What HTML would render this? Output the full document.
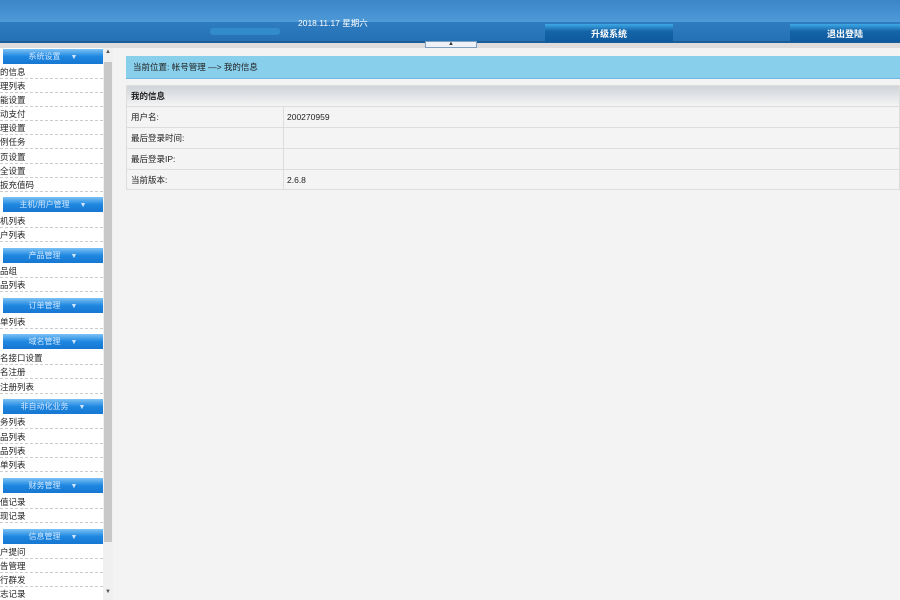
<!DOCTYPE html>
<html><head><meta charset="utf-8"><style>
*{margin:0;padding:0;box-sizing:border-box}
body{width:900px;height:600px;overflow:hidden;background:#f4f3f3;font-family:"Liberation Sans","Noto Sans CJK SC",sans-serif;font-size:9px;color:#222;position:relative}
.a{position:absolute}
.top{left:0;top:0;width:900px;height:23px;background:linear-gradient(#3c86c8,#4f9ad8)}
.band{left:0;top:22px;width:900px;height:21px;background:linear-gradient(#2f7cc0,#2671b6);border-bottom:2px solid #1d5d95}
.btn{top:24px;height:18px;background:linear-gradient(#3fa9e6,#1565a8 40%,#0e5a9e);color:#fff;font-weight:bold;text-align:center;line-height:20px;font-size:9px}
.grey{left:0;top:43px;width:900px;height:5px;background:#dedcdc}
.sb{left:0;top:48px;width:103px;height:552px;background:#fff;overflow:hidden}
.h{position:absolute;left:0;width:103px;height:15px;background:linear-gradient(#7cc2f4,#1f87e0 50%,#1577d2);color:#cfe6ff;text-align:center;line-height:15px;font-size:8px;border-left:3px solid #fff}
.h span{margin-left:10px;font-size:7px}
.i{position:absolute;left:0;width:103px;height:14px;line-height:14px;border-bottom:1px dashed #ccc;font-size:8.5px;white-space:nowrap}
.scroll{left:103px;top:48px;width:10px;height:552px;background:#f0f0f0}
.thumb{left:104px;top:62px;width:8px;height:480px;background:#c8c8c8}
</style></head><body>
<div class="a top"></div>
<div class="a band"></div>
<div class="a" style="left:210px;top:28px;width:70px;height:7px;background:#3aa0dc;opacity:.5;border-radius:3px"></div>
<div class="a" style="left:298px;top:17px;color:#fff;font-size:8.5px">2018.11.17 星期六</div>
<div class="a btn" style="left:545px;width:128px">升级系统</div>
<div class="a btn" style="left:790px;width:110px">退出登陆</div>
<div class="a grey"></div>
<div class="a" style="left:425px;top:41px;width:52px;height:7px;background:#eef2f7;border:1px solid #7f9fc0;font-size:6px;text-align:center;line-height:4px;color:#333">▲</div>

<div class="a sb">
<div class="h" style="top:1px">系统设置<span>▼</span></div>
<div class="i" style="top:17px">的信息</div>
<div class="i" style="top:31px">理列表</div>
<div class="i" style="top:45px">能设置</div>
<div class="i" style="top:59px">动支付</div>
<div class="i" style="top:73px">理设置</div>
<div class="i" style="top:87px">例任务</div>
<div class="i" style="top:102px">页设置</div>
<div class="i" style="top:116px">全设置</div>
<div class="i" style="top:130px">扳充值码</div>
<div class="h" style="top:149px">主机/用户管理<span>▼</span></div>
<div class="i" style="top:166px">机列表</div>
<div class="i" style="top:180px">户列表</div>
<div class="h" style="top:200px">产品管理<span>▼</span></div>
<div class="i" style="top:216px">品组</div>
<div class="i" style="top:230px">品列表</div>
<div class="h" style="top:250px">订单管理<span>▼</span></div>
<div class="i" style="top:267px">单列表</div>
<div class="h" style="top:286px">域名管理<span>▼</span></div>
<div class="i" style="top:303px">名接口设置</div>
<div class="i" style="top:317px">名注册</div>
<div class="i" style="top:332px">注册列表</div>
<div class="h" style="top:351px">非自动化业务<span>▼</span></div>
<div class="i" style="top:367px">务列表</div>
<div class="i" style="top:382px">品列表</div>
<div class="i" style="top:396px">品列表</div>
<div class="i" style="top:410px">单列表</div>
<div class="h" style="top:430px">财务管理<span>▼</span></div>
<div class="i" style="top:447px">值记录</div>
<div class="i" style="top:461px">现记录</div>
<div class="h" style="top:481px">信息管理<span>▼</span></div>
<div class="i" style="top:497px">户提问</div>
<div class="i" style="top:511px">告管理</div>
<div class="i" style="top:525px">行群发</div>
<div class="i" style="top:539px">志记录</div>
</div>
<div class="a scroll"></div>
<div class="a thumb"></div>
<div class="a" style="left:105px;top:49px;font-size:6px;color:#555">▲</div>
<div class="a" style="left:105px;top:589px;font-size:6px;color:#555">▼</div>

<div class="a" style="left:126px;top:56px;width:774px;height:23px;background:#88cfec;border-bottom:1px solid #6cb8de;line-height:22px;padding-left:7px;font-size:8.5px">当前位置: 帐号管理 —&gt; 我的信息</div>
<div class="a" style="left:126px;top:85px;width:774px;height:105px;border:1px solid #ddd;background:#f4f4f4">
<div style="height:21px;background:linear-gradient(#d0d4d9,#f4f4f4);font-weight:bold;line-height:21px;padding-left:4px;font-size:8.5px;border-bottom:1px solid #ddd">我的信息</div>
<div style="height:21px;border-bottom:1px solid #ddd;line-height:20px;font-size:8.5px;position:relative"><span style="padding-left:4px">用户名:</span><span class="a" style="left:156px;top:0;height:20px;border-left:1px solid #ddd;padding-left:3px">200270959</span></div>
<div style="height:21px;border-bottom:1px solid #ddd;line-height:20px;font-size:8.5px;position:relative"><span style="padding-left:4px">最后登录时间:</span><span class="a" style="left:156px;top:0;height:20px;border-left:1px solid #ddd"></span></div>
<div style="height:21px;border-bottom:1px solid #ddd;line-height:20px;font-size:8.5px;position:relative"><span style="padding-left:4px">最后登录IP:</span><span class="a" style="left:156px;top:0;height:20px;border-left:1px solid #ddd"></span></div>
<div style="height:20px;line-height:20px;font-size:8.5px;position:relative"><span style="padding-left:4px">当前版本:</span><span class="a" style="left:156px;top:0;height:20px;border-left:1px solid #ddd;padding-left:3px">2.6.8</span></div>
</div>
</body></html>
